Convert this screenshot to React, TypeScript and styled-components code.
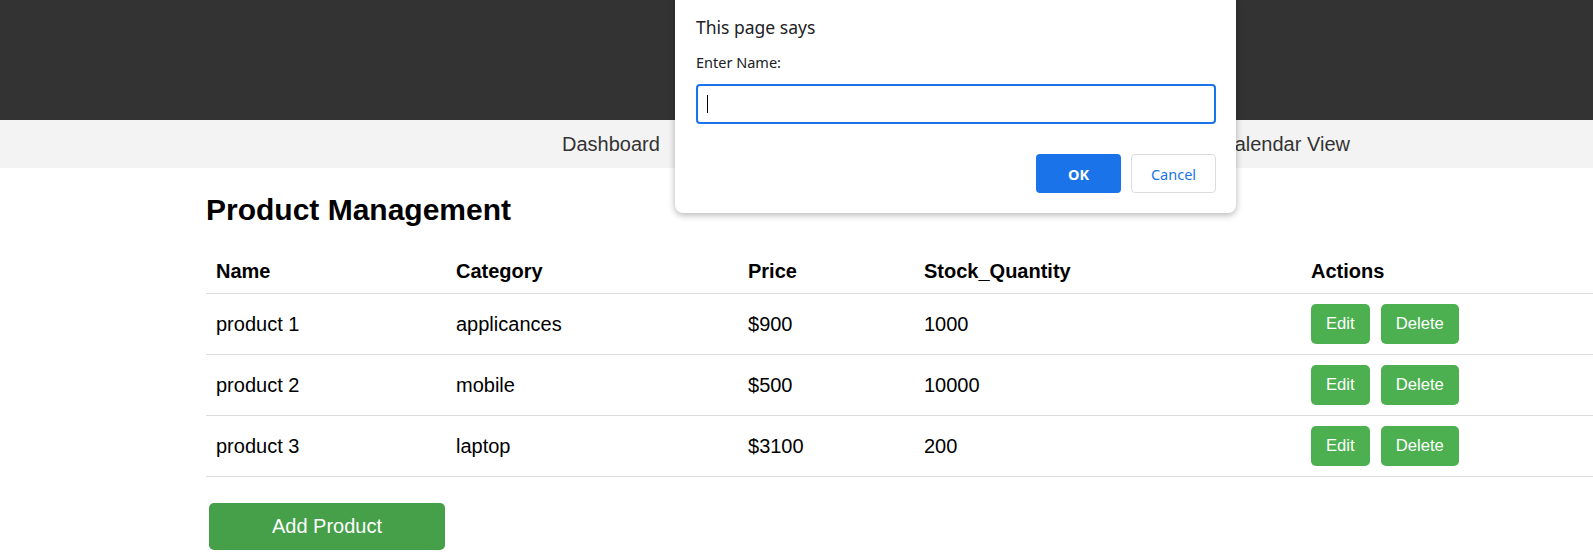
import React from 'react';
import styled, { createGlobalStyle } from 'styled-components';

interface Product {
  id: number;
  name: string;
  category: string;
  price: number;
  stock: number;
}

const products: Product[] = [
  { id: 1, name: 'product 1', category: 'applicances', price: 900, stock: 1000 },
  { id: 2, name: 'product 2', category: 'mobile', price: 500, stock: 10000 },
  { id: 3, name: 'product 3', category: 'laptop', price: 3100, stock: 200 },
];

const navLinks = ['Dashboard', 'Products', 'Orders', 'Customers', 'Calendar View'];

const GlobalStyle = createGlobalStyle`
  html, body {
    margin: 0;
    padding: 0;
    overflow: hidden;
    background: #fff;
  }
  body {
    font-family: "Liberation Sans", Arial, sans-serif;
    font-size: 20px;
    color: #000;
  }
`;

const Page = styled.div`
  position: relative;
  min-height: 557px;
`;

const Header = styled.header`
  height: 120px;
  background: #333;
`;

const NavBar = styled.nav`
  height: 48px;
  background: #f3f3f3;
  display: flex;
  align-items: center;
  padding-left: 562px;
`;

const NavList = styled.div`
  width: 788px;
  display: flex;
  justify-content: space-between;
`;

const NavLink = styled.a`
  color: #333;
  font-size: 20px;
  text-decoration: none;
  cursor: pointer;
`;

const Main = styled.main`
  padding-left: 206px;
`;

const Title = styled.h2`
  font-size: 30px;
  font-weight: bold;
  margin: 25px 0 23px;
`;

const Table = styled.table`
  width: 1387px;
  border-collapse: collapse;
  table-layout: fixed;
`;

const HeadCell = styled.th`
  text-align: left;
  font-weight: bold;
  padding: 10px;
  border-bottom: 1px solid #ddd;
  line-height: 23px;
`;

const Cell = styled.td`
  padding: 10px;
  border-bottom: 1px solid #ddd;
  line-height: 23px;
  vertical-align: middle;
`;

const ActionGroup = styled.div`
  display: flex;
  gap: 11px;
`;

const SmallButton = styled.button`
  height: 40px;
  padding: 0 15px;
  border: none;
  border-radius: 5px;
  background: #4caf50;
  color: #fff;
  font-family: "Liberation Sans", Arial, sans-serif;
  font-size: 16.67px;
  cursor: pointer;
`;

const AddButton = styled.button`
  margin: 26px 0 0 3px;
  width: 236px;
  height: 47px;
  border: none;
  border-radius: 5px;
  background: #45a049;
  color: #fff;
  font-family: "Liberation Sans", Arial, sans-serif;
  font-size: 20px;
  cursor: pointer;
`;

const Dialog = styled.div`
  position: absolute;
  left: 675px;
  top: -8px;
  width: 561px;
  box-sizing: border-box;
  padding: 24px 20px 20px 21px;
  background: #fff;
  border-radius: 8px;
  box-shadow: 0 2px 7px rgba(0, 0, 0, 0.3);
  font-family: "Noto Sans", "Open Sans", sans-serif;
  color: #202124;
`;

const DialogTitle = styled.div`
  font-size: 17.5px;
  line-height: 22px;
`;

const DialogLabel = styled.div`
  margin-top: 15px;
  font-size: 14.5px;
  line-height: 18px;
`;

const FakeInput = styled.div`
  margin-top: 13px;
  height: 40px;
  box-sizing: border-box;
  border: 2px solid #1a73e8;
  border-radius: 4px;
  display: flex;
  align-items: center;
  padding-left: 9px;
`;

const Caret = styled.span`
  width: 1px;
  height: 18px;
  background: #000;
`;

const DialogActions = styled.div`
  margin-top: 30px;
  display: flex;
  justify-content: flex-end;
  gap: 10px;
`;

const DialogButton = styled.button<{ primary?: boolean }>`
  width: 85px;
  height: 39px;
  border-radius: 4px;
  font-family: "Noto Sans", "Open Sans", sans-serif;
  font-size: 14.5px;
  cursor: pointer;
  ${props => props.primary ? `
    background: #1a73e8;
    border: none;
    color: #fff;
    font-weight: bold;
  ` : `
    background: #fff;
    border: 1px solid #dadce0;
    color: #1a73e8;
  `}
`;

const App: React.FC = () => {
  return (
    <Page>
      <GlobalStyle />
      <Header />
      <NavBar>
        <NavList>
          {navLinks.map(link => (
            <NavLink key={link}>{link}</NavLink>
          ))}
        </NavList>
      </NavBar>
      <Main>
        <Title>Product Management</Title>
        <Table>
          <colgroup>
            <col style={{ width: 240 }} />
            <col style={{ width: 292 }} />
            <col style={{ width: 176 }} />
            <col style={{ width: 387 }} />
            <col />
          </colgroup>
          <thead>
            <tr>
              <HeadCell>Name</HeadCell>
              <HeadCell>Category</HeadCell>
              <HeadCell>Price</HeadCell>
              <HeadCell>Stock_Quantity</HeadCell>
              <HeadCell>Actions</HeadCell>
            </tr>
          </thead>
          <tbody>
            {products.map(p => (
              <tr key={p.id}>
                <Cell>{p.name}</Cell>
                <Cell>{p.category}</Cell>
                <Cell>${p.price}</Cell>
                <Cell>{p.stock}</Cell>
                <Cell>
                  <ActionGroup>
                    <SmallButton>Edit</SmallButton>
                    <SmallButton>Delete</SmallButton>
                  </ActionGroup>
                </Cell>
              </tr>
            ))}
          </tbody>
        </Table>
        <AddButton>Add Product</AddButton>
      </Main>
      <Dialog>
        <DialogTitle>This page says</DialogTitle>
        <DialogLabel>Enter Name:</DialogLabel>
        <FakeInput>
          <Caret />
        </FakeInput>
        <DialogActions>
          <DialogButton primary>OK</DialogButton>
          <DialogButton>Cancel</DialogButton>
        </DialogActions>
      </Dialog>
    </Page>
  );
};

export default App;
